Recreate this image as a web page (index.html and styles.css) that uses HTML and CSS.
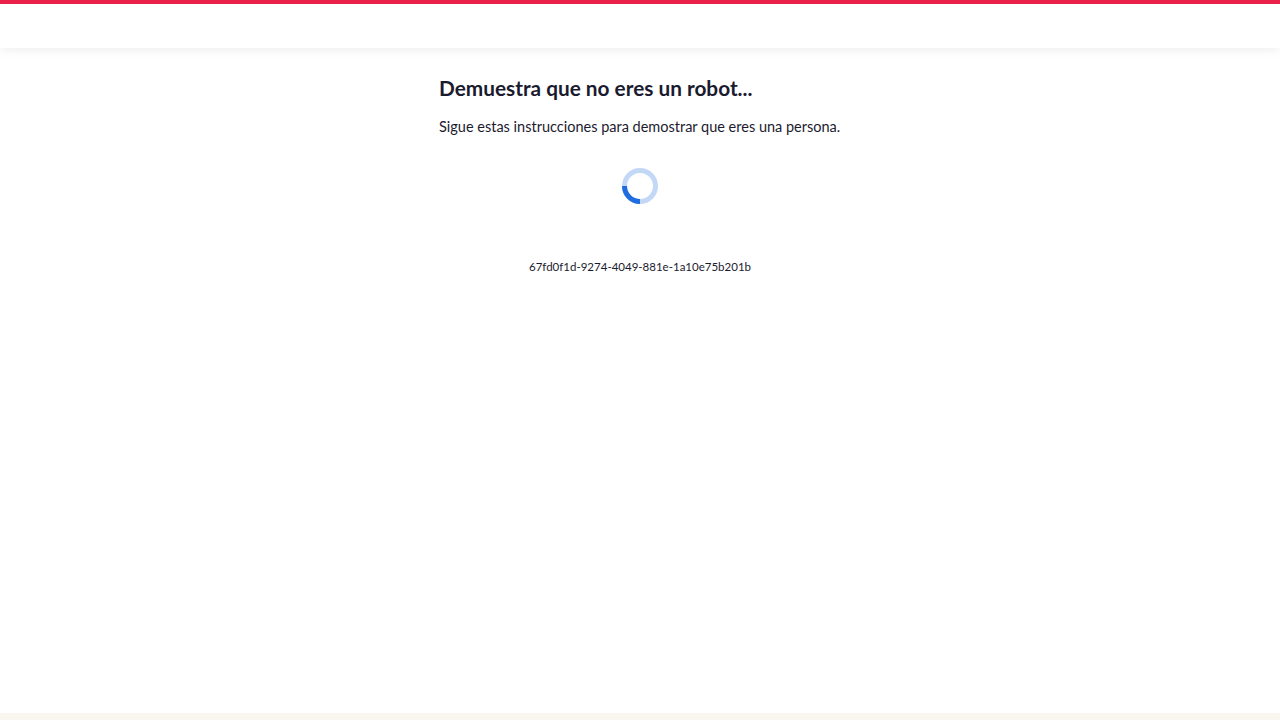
FILE: index.html
```html
<!DOCTYPE html>
<html lang="es">
<head>
<meta charset="utf-8">
<title>Demuestra que no eres un robot</title>
<link rel="stylesheet" href="styles.css">
</head>
<body>
<header class="topbar"></header>
<main class="content">
  <h1 class="title">Demuestra que no eres un robot...</h1>
  <p class="subtitle">Sigue estas instrucciones para demostrar que eres una persona.</p>
  <div class="spinner-wrap">
    <svg class="spinner" width="38" height="38" viewBox="0 0 38 38">
      <circle cx="19" cy="19" r="15.5" fill="none" stroke="#c3d7f7" stroke-width="5"/>
      <path d="M3.5 19 A15.5 15.5 0 0 0 19 34.5" fill="none" stroke="#1f6de0" stroke-width="5"/>
    </svg>
  </div>
  <p class="ref-id">67fd0f1d-9274-4049-881e-1a10e75b201b</p>
</main>
<footer class="footer-strip"></footer>
</body>
</html>
```
FILE: styles.css
```css
html, body {
  margin: 0;
  padding: 0;
  height: 100%;
}
body {
  font-family: "Lato", "Open Sans", sans-serif;
  color: #1b1b2f;
  background: #ffffff;
  display: flex;
  flex-direction: column;
  overflow: hidden;
}
.topbar {
  height: 44px;
  border-top: 4px solid #e8204a;
  background: #ffffff;
  box-shadow: 0 2px 10px rgba(0, 0, 0, 0.07);
  flex: none;
}
.content {
  width: 402px;
  margin: 0 auto;
  flex: 1;
}
.title {
  margin: 27px 0 0;
  font-size: 20.8px;
  font-weight: 700;
  line-height: 26px;
  color: #1b1b2f;
}
.subtitle {
  margin: 16px 0 0;
  font-size: 14.5px;
  line-height: 20px;
}
.spinner-wrap {
  display: flex;
  justify-content: center;
  margin-top: 30px;
}
.spinner {
  display: block;
}
.ref-id {
  margin: 54px 0 0;
  text-align: center;
  font-size: 11.5px;
  line-height: 16px;
}
.footer-strip {
  height: 7px;
  background: #f9f6f0;
  flex: none;
}
```
